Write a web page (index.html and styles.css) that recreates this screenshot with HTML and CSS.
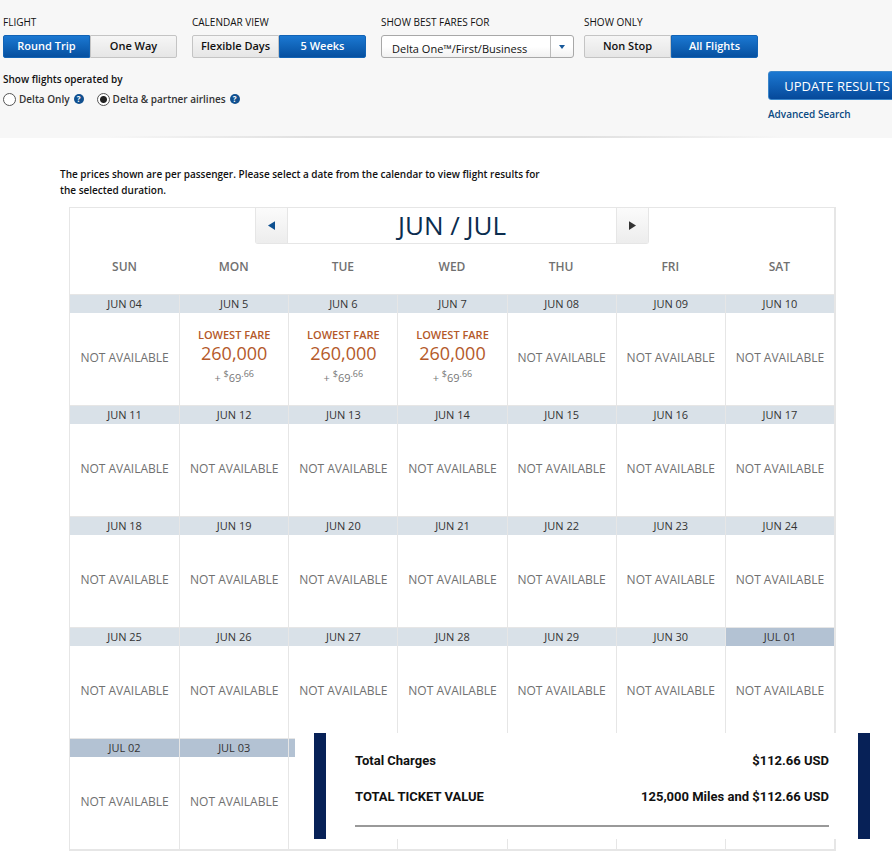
FILE: index.html
```html
<!DOCTYPE html>
<html lang="en">
<head>
<meta charset="utf-8">
<title>Fare Calendar</title>
<link rel="stylesheet" href="styles.css">
</head>
<body>
<form class="filters">
  <div class="filter-row">
    <fieldset class="group">
      <legend>FLIGHT</legend>
      <div class="toggle"><button type="button" class="on">Round Trip</button><button type="button">One Way</button></div>
    </fieldset>
    <fieldset class="group">
      <legend>CALENDAR VIEW</legend>
      <div class="toggle"><button type="button">Flexible Days</button><button type="button" class="on">5 Weeks</button></div>
    </fieldset>
    <div class="group fares">
      <label for="cabin">SHOW BEST FARES FOR</label>
      <div class="select">
        <select id="cabin"><option>Delta One™/First/Business</option></select>
        <svg class="caret" viewBox="0 0 6 4" aria-hidden="true"><path d="M0 0h6L3 4z"/></svg>
      </div>
    </div>
    <fieldset class="group">
      <legend>SHOW ONLY</legend>
      <div class="toggle"><button type="button">Non Stop</button><button type="button" class="on">All Flights</button></div>
    </fieldset>
  </div>
  <div class="submit-row">
    <fieldset class="group operated">
      <legend>Show flights operated by</legend>
      <div class="radios">
        <input type="radio" name="carrier" id="only"><label for="only">Delta Only</label>
        <button type="button" class="help" aria-label="Help">?</button>
        <input type="radio" name="carrier" id="partner" checked><label for="partner">Delta &amp; partner airlines</label>
        <button type="button" class="help" aria-label="Help">?</button>
      </div>
    </fieldset>
    <div class="submit">
      <button type="submit" class="update">UPDATE RESULTS</button>
      <a href="#">Advanced Search</a>
    </div>
  </div>
</form>
<main>
  <p class="intro">The prices shown are per passenger. Please select a date from the calendar to view flight results for the selected duration.</p>
  <section class="calendar">
    <div class="month">
      <button type="button" aria-label="Previous"><svg class="prev" viewBox="0 0 8 10"><path d="M8 0v10L0 5z"/></svg></button>
      <h1>JUN / JUL</h1>
      <button type="button" aria-label="Next"><svg viewBox="0 0 8 10"><path d="M0 0v10l8-5z"/></svg></button>
    </div>
    <table>
      <thead><tr><th>SUN</th><th>MON</th><th>TUE</th><th>WED</th><th>THU</th><th>FRI</th><th>SAT</th></tr></thead>
      <tbody>
        <tr>
          <td><div class="date">JUN 04</div><div class="fare">NOT AVAILABLE</div></td>
          <td><div class="date">JUN 5</div><div class="fare low"><b>LOWEST FARE</b><strong>260,000</strong><span>+ <sup>$</sup>69<sup>.66</sup></span></div></td>
          <td><div class="date">JUN 6</div><div class="fare low"><b>LOWEST FARE</b><strong>260,000</strong><span>+ <sup>$</sup>69<sup>.66</sup></span></div></td>
          <td><div class="date">JUN 7</div><div class="fare low"><b>LOWEST FARE</b><strong>260,000</strong><span>+ <sup>$</sup>69<sup>.66</sup></span></div></td>
          <td><div class="date">JUN 08</div><div class="fare">NOT AVAILABLE</div></td>
          <td><div class="date">JUN 09</div><div class="fare">NOT AVAILABLE</div></td>
          <td><div class="date">JUN 10</div><div class="fare">NOT AVAILABLE</div></td>
        </tr>
        <tr>
          <td><div class="date">JUN 11</div><div class="fare">NOT AVAILABLE</div></td>
          <td><div class="date">JUN 12</div><div class="fare">NOT AVAILABLE</div></td>
          <td><div class="date">JUN 13</div><div class="fare">NOT AVAILABLE</div></td>
          <td><div class="date">JUN 14</div><div class="fare">NOT AVAILABLE</div></td>
          <td><div class="date">JUN 15</div><div class="fare">NOT AVAILABLE</div></td>
          <td><div class="date">JUN 16</div><div class="fare">NOT AVAILABLE</div></td>
          <td><div class="date">JUN 17</div><div class="fare">NOT AVAILABLE</div></td>
        </tr>
        <tr>
          <td><div class="date">JUN 18</div><div class="fare">NOT AVAILABLE</div></td>
          <td><div class="date">JUN 19</div><div class="fare">NOT AVAILABLE</div></td>
          <td><div class="date">JUN 20</div><div class="fare">NOT AVAILABLE</div></td>
          <td><div class="date">JUN 21</div><div class="fare">NOT AVAILABLE</div></td>
          <td><div class="date">JUN 22</div><div class="fare">NOT AVAILABLE</div></td>
          <td><div class="date">JUN 23</div><div class="fare">NOT AVAILABLE</div></td>
          <td><div class="date">JUN 24</div><div class="fare">NOT AVAILABLE</div></td>
        </tr>
        <tr>
          <td><div class="date">JUN 25</div><div class="fare">NOT AVAILABLE</div></td>
          <td><div class="date">JUN 26</div><div class="fare">NOT AVAILABLE</div></td>
          <td><div class="date">JUN 27</div><div class="fare">NOT AVAILABLE</div></td>
          <td><div class="date">JUN 28</div><div class="fare">NOT AVAILABLE</div></td>
          <td><div class="date">JUN 29</div><div class="fare">NOT AVAILABLE</div></td>
          <td><div class="date">JUN 30</div><div class="fare">NOT AVAILABLE</div></td>
          <td><div class="date july">JUL 01</div><div class="fare">NOT AVAILABLE</div></td>
        </tr>
        <tr>
          <td><div class="date july">JUL 02</div><div class="fare">NOT AVAILABLE</div></td>
          <td><div class="date july">JUL 03</div><div class="fare">NOT AVAILABLE</div></td>
          <td><div class="date july"></div><div class="fare"></div></td>
          <td><div class="date july"></div><div class="fare"></div></td>
          <td><div class="date july"></div><div class="fare"></div></td>
          <td><div class="date july"></div><div class="fare"></div></td>
          <td><div class="date july"></div><div class="fare"></div></td>
        </tr>
      </tbody>
    </table>
    <aside class="charges">
      <dl>
        <div><dt>Total Charges</dt><dd>$112.66 USD</dd></div>
        <div><dt>TOTAL TICKET VALUE</dt><dd>125,000 Miles and $112.66 USD</dd></div>
      </dl>
    </aside>
  </section>
</main>
</body>
</html>
```
FILE: styles.css
```css
* { box-sizing: border-box; }
body {
  margin: 0;
  overflow-x: hidden;
  background: #fff;
  color: #111;
  font: 10px/16px "Open Sans", "Noto Sans", sans-serif;
}
button, select { font-family: inherit; margin: 0; cursor: pointer; }
fieldset { margin: 0; padding: 0; border: 0; min-width: 0; }
legend { padding: 0; }

/* Filter bar */
.filters {
  position: relative;
  height: 138px;
  padding: 14px 0 0 3px;
  background: #f7f7f7;
}
.filters::after {
  content: "";
  position: absolute;
  left: 12%;
  right: 12%;
  bottom: 0;
  height: 2px;
  background: linear-gradient(90deg, #f7f7f7, #e0e0e0 30%, #e0e0e0 70%, #f7f7f7);
}
.filter-row { display: flex; gap: 15px; }
.group legend, .group > label { display: block; height: 21px; font-weight: 500; }
.toggle { display: flex; width: 174px; height: 23px; }
.toggle button {
  flex: 1;
  padding: 0 0 2px;
  border: 1px solid #c4c4c4;
  background: linear-gradient(#f6f6f6, #e6e6e6);
  color: #111;
  font-size: 11px;
  font-weight: 600;
}
.toggle button:first-child { border-radius: 2px 0 0 2px; }
.toggle button:last-child { border-radius: 0 2px 2px 0; }
.toggle .on {
  border-color: #1263b5;
  background: linear-gradient(#1b78d2, #0650a0);
  color: #fff;
}
.fares { width: 193px; margin-right: -5px; }
.select { position: relative; }
.select select {
  appearance: none;
  display: block;
  width: 100%;
  height: 23px;
  padding: 3px 24px 0 10px;
  border: 1px solid #a8a8a8;
  border-radius: 3px;
  background: linear-gradient(#bbb, #bbb) right 22px top / 1px 100% no-repeat, linear-gradient(#fff 50%, #f1f1f1);
  color: #111;
  font-size: 11px;
  font-weight: 500;
}
.caret { position: absolute; right: 9px; top: 10px; width: 6px; height: 4px; fill: #17589a; }

.submit-row { display: flex; justify-content: space-between; margin-top: 13px; }
.operated legend { height: 20px; font-weight: 600; }
.radios { display: flex; align-items: center; color: #333; font-weight: 600; }
.radios input {
  appearance: none;
  width: 13px;
  height: 13px;
  margin: 0 3px 0 0;
  border: 1px solid #555;
  border-radius: 50%;
  background: #fff;
}
.radios input:checked { background: radial-gradient(circle, #222 3px, #fff 4px); }
.help {
  width: 10px;
  height: 10px;
  margin: 0 13px 0 4px;
  padding: 0;
  border: 0;
  border-radius: 50%;
  background: #11508f;
  color: #fff;
  font-size: 8px;
  font-weight: 700;
  line-height: 10px;
}
.submit { width: 138px; margin-right: -14px; }
.update {
  display: block;
  width: 100%;
  height: 29px;
  margin-bottom: 6px;
  border: 1px solid #3b86ca;
  border-radius: 3px;
  padding: 0;
  background: linear-gradient(#1b78d2, #06499a);
  color: #fff;
  font-size: 13px;
}
.submit a { color: #0b4a82; font-weight: 600; text-decoration: none; }

/* Calendar */
main { padding: 28px 56px 0 60px; }
.intro { max-width: 492px; margin: 0 0 9px; font-weight: 600; }
.calendar {
  position: relative;
  margin-left: 9px;
  border: 1px solid #e6e6e6;
  border-width: 1px 2px 2px 1px;
}
.month { display: flex; width: 394px; height: 36px; margin: 0 auto; border: 1px solid #e6e6e6; border-top: 0; border-radius: 0 0 3px 3px; }
.month button { width: 32px; padding: 0; border: 0; background: linear-gradient(#fbfbfb, #ededed); }
.month button:first-child { border-right: 1px solid #e6e6e6; }
.month button:last-child { border-left: 1px solid #e6e6e6; }
.month svg { display: block; width: 7px; height: 9px; margin: auto; fill: #333; }
.month .prev { fill: #0d4f8f; }
.month h1 { flex: 1; margin: 0; color: #0b2d4f; font-size: 26px; line-height: 34px; font-weight: 400; text-align: center; }
table { width: 100%; table-layout: fixed; border-collapse: separate; border-spacing: 0; }
th { height: 50px; padding: 0 0 4px; color: #707070; font-size: 12px; font-weight: 600; }
td { padding: 0; border-left: 1px solid #e6e6e6; }
td:first-child { border-left: 0; }
.date { height: 19px; border-top: 1px solid #e6e6e6; background: #d9e1e8; color: #333; font-size: 11px; line-height: 18px; text-align: center; }
.july { background: #b3c2d3; }
.fare { display: flex; flex-direction: column; justify-content: center; align-items: center; height: 92px; padding-bottom: 3px; color: #707070; font-size: 12px; }
.low { padding-bottom: 4px; color: #777; font-size: 11px; }
.low b { color: #b4592a; font-size: 11px; font-weight: 600; }
.low strong { color: #b4592a; font-size: 18px; line-height: 21px; font-weight: 400; }
.low span { margin-top: 5px; line-height: 18px; }
sup { font-size: 9px; line-height: 0; }

/* Charges summary laid over the last week */
.charges {
  position: absolute;
  left: 225px;
  right: -56px;
  bottom: 10px;
  height: 106px;
  padding: 0 20px 0 19px;
  background: #fff;
}
.charges dl { height: 106px; margin: 0; padding: 10px 29px 0 29px; border: solid #072157; border-width: 0 12px; }
.charges dl div { display: flex; justify-content: space-between; height: 36px; color: #111; font: bold 13px/36px Roboto, "Liberation Sans", sans-serif; }
.charges dl::after { content: ""; display: block; height: 2px; margin-top: 10px; background: #999; }
.charges dd { margin: 0; }
```
